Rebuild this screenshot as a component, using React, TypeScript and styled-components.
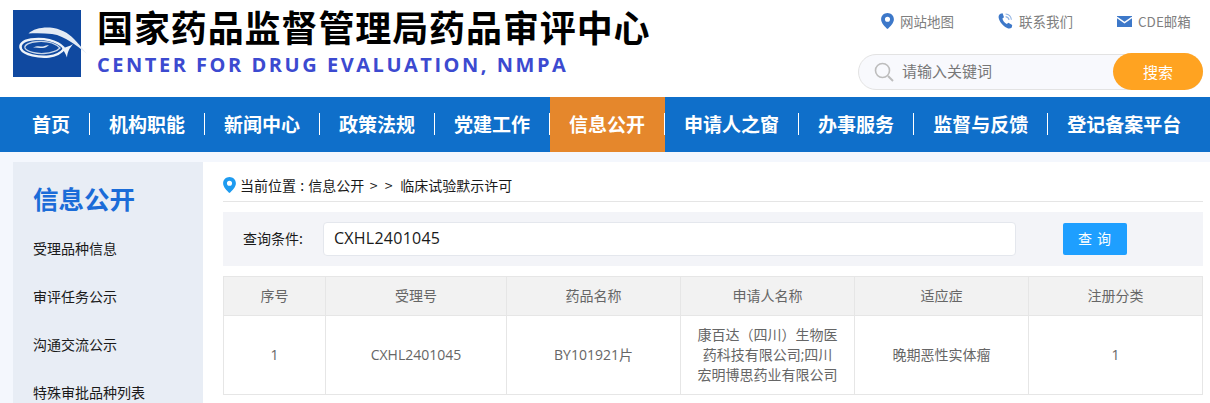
import React from 'react'
import styled, { createGlobalStyle } from 'styled-components'

const GlobalStyle = createGlobalStyle`
  html, body {
    margin: 0;
    padding: 0;
    background: #ffffff;
    overflow: hidden;
    font-family: "Noto Sans CJK SC", "Noto Sans", sans-serif;
  }
  * { box-sizing: border-box; }
`

const navItems = ['首页', '机构职能', '新闻中心', '政策法规', '党建工作', '信息公开', '申请人之窗', '办事服务', '监督与反馈', '登记备案平台']
const sideItems = ['受理品种信息', '审评任务公示', '沟通交流公示', '特殊审批品种列表']
const columns = ['序号', '受理号', '药品名称', '申请人名称', '适应症', '注册分类']

const Logo = () => (
  <LogoSvg viewBox="0 0 76 68">
    <rect x="0" y="0" width="68" height="67" fill="#1049a0" />
    <path d="M15.5 23.5 C20 19 29 17 37 17.6 C47 18.4 55 23 61 29 C65 33 69 38 74 44 C68 39 63 35 58 32 C52 28 46 25 39 24 C31 23 22 23 15.5 23.5Z" fill="#e4ebf4" />
    <path d="M51 38 C44 30.5 30 27.5 18 29.5 C9 31 6 35 8 39 C11 45 26 47.5 36 46.5 C43 46 48 43 52 38" fill="none" stroke="#eef3f9" strokeWidth="2.4" />
    <path d="M47 38 C42 33 33 31 25 31.5 C16 32 11 35 12 38 C14 42 24 44 31 43.5 C38 43 44 41 47 38Z" fill="none" stroke="#c7d5e8" strokeWidth="1.3" />
    <path d="M20 37.5 C24 35.5 27 36.5 30 36.5 C32 36 34 35 36 35 C34 37 32 38 30 38 C26 38 23 37.5 20 37.5Z" fill="#dfe8f3" />
    <path d="M49 38 C53 37.5 57 36 60 34 C57 38 54.5 41 54 47.5 C52.5 43.5 51 41 49 38Z" fill="#eef3f9" />
  </LogoSvg>
)

const PinIcon = ({ color, width }: { color: string; width: number }) => (
  <svg width={width} height={Math.round(width * 1.25)} viewBox="0 0 12 15">
    <path fillRule="evenodd" d="M6 0 C9.3 0 12 2.6 12 5.8 C12 9.4 8.4 12.8 6 15 C3.6 12.8 0 9.4 0 5.8 C0 2.6 2.7 0 6 0Z M6 3.4 A2.4 2.4 0 1 0 6 8.2 A2.4 2.4 0 1 0 6 3.4Z" fill={color} />
  </svg>
)

const PhoneIcon = () => (
  <svg width="15" height="16" viewBox="0 0 15 16">
    <path d="M2.4 0.8 L4.6 0.3 L6 4.2 L4.4 5.6 C4.9 7.8 6.6 10 8.8 11 L10.4 9.8 L14.2 12 L13.8 14.4 C12.6 15.6 10.8 15.9 9.2 15 C5 13 1.6 9 0.7 5 C0.3 3.2 1 1.8 2.4 0.8Z" fill="#3d78c9" />
    <path d="M7.6 1 C10.6 1.2 13 3.6 13.4 6.8 M7.6 3.6 C9.4 3.8 10.8 5.2 11 7" fill="none" stroke="#8fb2e2" strokeWidth="1.1" />
  </svg>
)

const MailIcon = () => (
  <svg width="15" height="11" viewBox="0 0 15 11">
    <rect x="0" y="0" width="15" height="11" fill="#3d78c9" />
    <path d="M0 1.4 L7.5 6.6 L15 1.4" fill="none" stroke="#ffffff" strokeWidth="1.3" />
  </svg>
)

const SearchIcon = () => (
  <svg width="20" height="20" viewBox="0 0 20 20">
    <circle cx="8.5" cy="8.5" r="7" fill="none" stroke="#bdbdbd" strokeWidth="1.6" />
    <path d="M14 14 L19 19" stroke="#bdbdbd" strokeWidth="2" />
  </svg>
)

const App = () => {
  return (
    <Page>
      <GlobalStyle />
      <Header>
        <Brand>
          <Logo />
          <BrandText>
            <Title>国家药品监督管理局药品审评中心</Title>
            <SubTitle>CENTER FOR DRUG EVALUATION, NMPA</SubTitle>
          </BrandText>
        </Brand>
        <Tools>
          <Links>
            <LinkItem><PinIcon color="#3d78c9" width={13} />网站地图</LinkItem>
            <LinkItem><PhoneIcon />联系我们</LinkItem>
            <LinkItem><MailIcon />CDE邮箱</LinkItem>
          </Links>
          <SearchBox>
            <SearchIcon />
            <SearchHint>请输入关键词</SearchHint>
            <SearchButton>搜索</SearchButton>
          </SearchBox>
        </Tools>
      </Header>
      <Nav>
        {navItems.map((item, i) => (
          <NavItem key={item} $active={item === '信息公开'} $last={i === navItems.length - 1}>{item}</NavItem>
        ))}
      </Nav>
      <Body>
        <Sidebar>
          <SideTitle>信息公开</SideTitle>
          {sideItems.map((item) => (
            <SideItem key={item}>{item}</SideItem>
          ))}
        </Sidebar>
        <Main>
          <Crumb>
            <PinIcon color="#1e9bf0" width={13} />
            <CrumbText>
              当前位置 : 信息公开
              <CrumbArrow>&gt;</CrumbArrow>
              <CrumbArrow>&gt;</CrumbArrow>
              <CrumbLast>临床试验默示许可</CrumbLast>
            </CrumbText>
          </Crumb>
          <QueryBar>
            <QueryLabel>查询条件:</QueryLabel>
            <QueryInput>CXHL2401045</QueryInput>
            <QueryButton>查 询</QueryButton>
          </QueryBar>
          <Table>
            <colgroup>
              <col style={{ width: 102 }} />
              <col style={{ width: 181 }} />
              <col style={{ width: 174 }} />
              <col style={{ width: 174 }} />
              <col style={{ width: 174 }} />
              <col style={{ width: 174 }} />
            </colgroup>
            <thead>
              <tr>
                {columns.map((c) => (
                  <Th key={c}>{c}</Th>
                ))}
              </tr>
            </thead>
            <tbody>
              <tr>
                <Td>1</Td>
                <Td>CXHL2401045</Td>
                <Td>BY101921片</Td>
                <Td>康百达（四川）生物医药科技有限公司;四川宏明博思药业有限公司</Td>
                <Td>晚期恶性实体瘤</Td>
                <Td>1</Td>
              </tr>
            </tbody>
          </Table>
        </Main>
      </Body>
    </Page>
  )
}

const Page = styled.div`
  width: 1210px;
  height: 403px;
  overflow: hidden;
  background: #ffffff;
`
const Header = styled.header`
  height: 97px;
  display: flex;
  justify-content: space-between;
  padding-left: 13px;
`
const Brand = styled.div`
  display: flex;
  align-items: flex-start;
  padding-top: 10px;
`
const LogoSvg = styled.svg`
  width: 76px;
  height: 68px;
  flex: none;
`
const BrandText = styled.div`
  margin-left: 8px;
  margin-top: -11px;
`
const Title = styled.div`
  font-size: 36px;
  font-weight: 700;
  line-height: 54px;
  letter-spacing: 0.9px;
  color: #000000;
  white-space: nowrap;
`
const SubTitle = styled.div`
  font-family: "Open Sans", sans-serif;
  font-size: 20px;
  font-weight: 700;
  line-height: 24px;
  letter-spacing: 2.53px;
  color: #3c4ad0;
  white-space: nowrap;
`
const Tools = styled.div`
  width: 352px;
`
const Links = styled.div`
  display: flex;
  padding: 11px 0 0 23px;
  height: 54px;
`
const LinkItem = styled.div`
  display: flex;
  align-items: center;
  height: 20px;
  gap: 6px;
  font-size: 13.5px;
  color: #808080;
  white-space: nowrap;
  margin-right: 44px;
  &:last-child { margin-right: 0; }
`
const SearchBox = styled.div`
  position: relative;
  width: 345px;
  height: 36px;
  display: flex;
  align-items: center;
  padding-left: 15px;
  background: #f8f9fd;
  border: 1px solid #e3e3e3;
  border-radius: 18px;
`
const SearchHint = styled.span`
  margin: -3px 0 0 8px;
  font-size: 15px;
  color: #777777;
`
const SearchButton = styled.button`
  position: absolute;
  right: -1px;
  top: -2px;
  width: 90px;
  height: 37px;
  border: 0;
  border-radius: 19px;
  background: #ffa321;
  color: #ffffff;
  font-family: inherit;
  font-size: 15px;
`
const Nav = styled.nav`
  height: 55px;
  display: flex;
  padding-left: 13px;
  background: #0f6fca;
`
const NavItem = styled.div<{ $active: boolean; $last: boolean }>`
  position: relative;
  padding: 0 20px 2px 19px;
  line-height: 53px;
  font-size: 19px;
  font-weight: 700;
  color: #ffffff;
  white-space: nowrap;
  background: ${(p) => (p.$active ? '#e5872c' : 'transparent')};
  &::after {
    content: '';
    display: ${(p) => (p.$last ? 'none' : 'block')};
    position: absolute;
    right: 0;
    top: 16px;
    width: 1px;
    height: 22px;
    background: #ffffff;
  }
`
const Body = styled.div`
  height: 251px;
  display: flex;
  padding: 10px 0 0 13px;
  background: #f4f7fd;
`
const Sidebar = styled.aside`
  width: 190px;
  flex: none;
  padding: 19px 0 0 20px;
  background: #e8edf5;
`
const SideTitle = styled.div`
  font-size: 25.5px;
  font-weight: 700;
  line-height: 34px;
  color: #1b6cd8;
  margin-bottom: 9px;
`
const SideItem = styled.div`
  height: 48px;
  line-height: 48px;
  font-size: 14px;
  color: #1a1a1a;
  white-space: nowrap;
`
const Main = styled.main`
  flex: 1;
  padding: 0 7px 0 20px;
  background: #ffffff;
`
const Crumb = styled.div`
  height: 40px;
  display: flex;
  align-items: center;
  gap: 4px;
  padding-top: 7px;
  border-bottom: 1px solid #e5e5e5;
`
const CrumbText = styled.span`
  font-size: 14px;
  word-spacing: 1px;
  color: #1a1a1a;
  white-space: nowrap;
`
const CrumbArrow = styled.span`
  display: inline-block;
  width: 15px;
  text-align: center;
  &:first-of-type { margin-left: 2px; }
`
const CrumbLast = styled.span`
  margin-left: 4px;
`
const QueryBar = styled.div`
  height: 54px;
  margin-top: 10px;
  display: flex;
  align-items: center;
  padding-left: 20px;
  background: #f3f4f8;
`
const QueryLabel = styled.span`
  width: 80px;
  margin-top: -3px;
  font-size: 14px;
  color: #1a1a1a;
`
const QueryInput = styled.div`
  width: 693px;
  height: 34px;
  padding-left: 10px;
  line-height: 30px;
  font-family: "Open Sans", "Noto Sans CJK SC", sans-serif;
  font-size: 16px;
  letter-spacing: 0.25px;
  color: #1a1a1a;
  background: #ffffff;
  border: 1px solid #e4e7ed;
  border-radius: 4px;
`
const QueryButton = styled.button`
  width: 64px;
  height: 32px;
  margin-left: 47px;
  border: 0;
  border-radius: 2px;
  background: #1e9fff;
  color: #ffffff;
  font-family: inherit;
  font-size: 14px;
  letter-spacing: 1px;
  padding: 0 0 2px;
`
const Table = styled.table`
  width: 979px;
  margin-top: 10px;
  border-collapse: collapse;
  table-layout: fixed;
  font-family: "Open Sans", "Noto Sans CJK SC", sans-serif;
  font-size: 14px;
  color: #666666;
`
const Th = styled.th`
  height: 39px;
  padding: 0 0 2px;
  font-weight: 400;
  background: #f2f2f2;
  border: 1px solid #e6e6e6;
`
const Td = styled.td`
  height: 79px;
  padding: 0 16px;
  line-height: 20px;
  text-align: center;
  border: 1px solid #e6e6e6;
`

export default App
